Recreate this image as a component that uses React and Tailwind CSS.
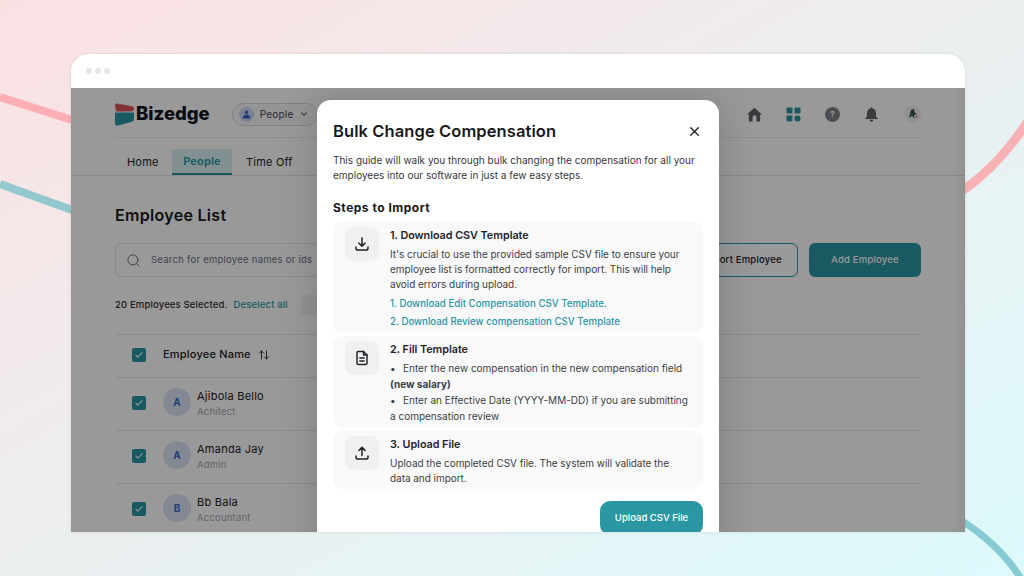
import { ChevronDown, Search, ArrowUpDown, Check, X } from 'lucide-react'

const employees = [
  { name: 'Ajibola Bello', role: 'Achitect', letter: 'A' },
  { name: 'Amanda Jay', role: 'Admin', letter: 'A' },
  { name: 'Bb Bala', role: 'Accountant', letter: 'B' },
]

function Logo() {
  return (
    <svg width="20" height="23" viewBox="0 0 20 23" className="shrink-0">
      <path d="M2 0.5 L16 3 Q19 3.6 19 6 Q19 8.4 16 8.4 L1 8.4 L0 2 Q0.2 0.3 2 0.5Z" fill="#d9585c" />
      <path d="M0 9.5 L19 9.5 L19 16 Q19 18 17 18.8 L3 22.6 Q0 23 0 20Z" fill="#2a97a3" />
    </svg>
  )
}

function TopIcons() {
  return (
    <div className="flex items-center gap-[24px]">
      <svg width="15" height="15" viewBox="0 0 24 24" fill="#5f6368">
        <path d="M12 1 L24 12 L21 12 L21 23 L15 23 L15 15.5 Q15 13 12 13 Q9 13 9 15.5 L9 23 L3 23 L3 12 L0 12Z" />
      </svg>
      <svg width="15" height="15" viewBox="0 0 15 15" fill="#2a97a3">
        <rect x="0.5" y="0.5" width="6" height="6" rx="0.8" />
        <rect x="8.5" y="0.5" width="6" height="6" rx="0.8" />
        <rect x="0.5" y="8.5" width="6" height="6" rx="0.8" />
        <circle cx="11.5" cy="11.5" r="3.1" />
      </svg>
      <div className="w-[15px] h-[15px] rounded-full bg-[#7d8186] flex items-center justify-center text-white text-[8px] font-bold leading-none">?</div>
      <svg width="15" height="15" viewBox="0 0 24 24" fill="#5f6368">
        <path d="M12 0.5 Q13.6 0.5 13.8 2.3 Q19.2 3.6 19.2 10 L19.2 15 L22.5 19 L1.5 19 L4.8 15 L4.8 10 Q4.8 3.6 10.2 2.3 Q10.4 0.5 12 0.5Z M9 20.5 L15 20.5 Q14.6 23.5 12 23.5 Q9.4 23.5 9 20.5Z" />
      </svg>
      <svg width="18" height="18" viewBox="0 0 18 18" className="ml-[1px]">
        <circle cx="9" cy="9" r="8.6" fill="#eef0ee" />
        <path d="M5 13 L7 5 L10 3.5 L10.5 7 L13 9 L10 10 L10.5 14 L8 11 Z" fill="#3b5a4a" />
        <path d="M11 10 L14 12 L12 12.5Z" fill="#b5545a" />
      </svg>
    </div>
  )
}

function Row({ name, role, letter }) {
  return (
    <div className="h-[53px] border-b border-[#e5e7eb] flex items-center">
      <div className="ml-[17px] mb-[2px] w-[14px] h-[14px] rounded-[2px] bg-[#2a97a3] flex items-center justify-center">
        <Check size={10} strokeWidth={2.5} className="text-white" />
      </div>
      <div className="ml-[17px] mb-[4px] w-[28px] h-[28px] rounded-full bg-[#dbe3f5] flex items-center justify-center text-[10px] font-bold text-[#3f66cc]">
        {letter}
      </div>
      <div className="ml-[6px] -mt-[1px]">
        <div className="text-[11px] leading-[15px] text-[#1d2129] tracking-[0.25px]">{name}</div>
        <div className="text-[9.5px] leading-[15px] text-[#a2a7af] tracking-[0.2px]">{role}</div>
      </div>
    </div>
  )
}

function Background() {
  return (
    <svg className="absolute inset-0" width="1024" height="576" viewBox="0 0 1024 576" fill="none">
      <path d="M0 97 L72 120" stroke="#fbafb2" strokeWidth="8" />
      <path d="M0 184 L72 210" stroke="#93c8cf" strokeWidth="8" />
      <path d="M962 191 Q1000 165 1030 118" stroke="#f8b2b5" strokeWidth="9" />
      <path d="M962 521 Q1000 545 1022 580" stroke="#87cbd2" strokeWidth="7" />
    </svg>
  )
}

function IconBox({ children }) {
  return (
    <div className="w-[34px] h-[34px] rounded-[8px] bg-[#f0f0f0] flex items-center justify-center shrink-0">
      <svg width="18" height="18" viewBox="0 0 18 18" fill="none" stroke="#1f2429" strokeWidth="1.5" strokeLinecap="round" strokeLinejoin="round">
        {children}
      </svg>
    </div>
  )
}

function Modal() {
  return (
    <div className="absolute left-[246px] top-[12px] w-[402px] h-[480px] bg-white rounded-t-[14px] shadow-[0_0_40px_rgba(0,0,0,0.18)] px-[16px] pt-[20px]">
      <div className="flex items-center justify-between h-[22px]">
        <h2 className="text-[16.5px] font-semibold text-[#17191c] tracking-[0.09px]">Bulk Change Compensation</h2>
        <X size={15} strokeWidth={2} className="text-[#17191c] mr-[1px]" />
      </div>
      <p className="mt-[11px] text-[10px] leading-[15px] text-[#33383d]">
        This guide will walk you through bulk changing the compensation for all your employees into our software in just a few easy steps.
      </p>
      <h3 className="mt-[17px] text-[12px] leading-[16px] font-bold text-[#17191c] tracking-[0.5px]">Steps to Import</h3>

      <div className="mt-[5px] flex flex-col gap-[3px]">
        <div className="h-[112px] rounded-[10px] bg-[#f9f9f9] flex pl-[12px] pt-[6px]">
          <IconBox>
            <path d="M9 3 V11 M5.8 8 L9 11.2 L12.2 8" />
            <path d="M3 12 V13.2 Q3 15 5 15 H13 Q15 15 15 13.2 V12" />
          </IconBox>
          <div className="ml-[11px] w-[300px] pt-[1px]">
            <div className="text-[10.8px] leading-[15px] font-semibold text-[#1f2429] tracking-[-0.03px]">1. Download CSV Template</div>
            <p className="mt-[4px] text-[10px] leading-[15px] text-[#3a3f44] tracking-[-0.03px]">
              It's crucial to use the provided sample CSV file to ensure your employee list is formatted correctly for import. This will help avoid errors during upload.
            </p>
            <div className="mt-[3px] text-[9.7px] leading-[18px] font-medium text-[#2a97a3]">
              <div>1. Download Edit Compensation CSV Template.</div>
              <div>2. Download Review compensation CSV Template</div>
            </div>
          </div>
        </div>

        <div className="h-[92px] rounded-[10px] bg-[#f9f9f9] flex pl-[12px] pt-[5px]">
          <IconBox>
            <path d="M5 2.5 H10.5 L14 6 V14 Q14 15.5 12.5 15.5 H5.5 Q4 15.5 4 14 V3.5 Q4 2.5 5 2.5Z" />
            <path d="M10.5 2.5 V6 H14 M6.8 9 H11.2 M6.8 12 H11.2" />
          </IconBox>
          <div className="ml-[11px] w-[312px] pt-[1px]">
            <div className="text-[10.8px] leading-[15px] font-semibold text-[#1f2429] tracking-[-0.03px]">2. Fill Template</div>
            <div className="mt-[3px] text-[10px] leading-[16px] text-[#3a3f44]">
              <div><span className="inline-block w-[13px]">•</span>Enter the new compensation in the new compensation field</div>
              <div className="font-bold">(new salary)</div>
              <div><span className="inline-block w-[13px]">•</span>Enter an Effective Date (YYYY-MM-DD) if you are submitting</div>
              <div>a compensation review</div>
            </div>
          </div>
        </div>

        <div className="h-[59px] rounded-[10px] bg-[#f9f9f9] flex pl-[12px] pt-[6px] -mt-[1px]">
          <IconBox>
            <path d="M9 11.5 V3.5 M5.8 6.5 L9 3.3 L12.2 6.5" />
            <path d="M3 12 V13.2 Q3 15 5 15 H13 Q15 15 15 13.2 V12" />
          </IconBox>
          <div className="ml-[11px] w-[295px] pt-[1px]">
            <div className="text-[10.8px] leading-[15px] font-semibold text-[#1f2429] tracking-[-0.03px]">3. Upload File</div>
            <p className="mt-[4px] text-[10px] leading-[15px] text-[#3a3f44] tracking-[-0.04px]">
              Upload the completed CSV file. The system will validate the data and import.
            </p>
          </div>
        </div>
      </div>

      <div className="mt-[12px] flex justify-end">
        <button className="w-[103px] h-[34px] pt-[1px] rounded-[10px] bg-[#2a97a3] text-white text-[9.5px] font-medium">
          Upload CSV File
        </button>
      </div>
    </div>
  )
}

export default function App() {
  return (
    <div className="relative w-[1024px] h-[576px] overflow-hidden bg-linear-to-br from-[#fbe0e2] via-[#eceff0] to-[#dcfafc] font-['Inter','Liberation_Sans',sans-serif]">
      <Background />

      <div className="relative mt-[54px] ml-[71px] w-[894px] h-[478px] rounded-t-[18px] overflow-hidden flex flex-col shadow-[0_0_3px_rgba(0,0,0,0.12)]">
        <div className="h-[34px] bg-white flex items-center gap-[3px] pl-[15px] shrink-0">
          <span className="w-[6px] h-[6px] rounded-full bg-[#e6e6e6]" />
          <span className="w-[6px] h-[6px] rounded-full bg-[#e6e6e6]" />
          <span className="w-[6px] h-[6px] rounded-full bg-[#e6e6e6]" />
        </div>

        <div className="relative flex-1 bg-white overflow-hidden">
          {/* page behind the dialog */}
          <div className="px-[44px]">
            <div className="h-[50px] border-b border-[#eceef0] flex items-center pt-[3px]">
              <Logo />
              <span className="ml-[1px] text-[18.5px] font-extrabold text-[#10151c]">Bizedge</span>
              <div className="ml-[22px] h-[23px] w-[86px] rounded-full border border-[#d5d9de] bg-[#f8f9fb] flex items-center pl-[6px]">
                <div className="w-[15px] h-[15px] rounded-full bg-[#cdd8f5] flex items-center justify-center">
                  <svg width="9" height="9" viewBox="0 0 9 9" fill="#3f66cc"><circle cx="4.5" cy="2.2" r="1.8" /><path d="M0.5 8.5 Q1 4.6 4.5 4.6 Q8 4.6 8.5 8.5Z" /></svg>
                </div>
                <span className="ml-[6px] text-[10px] text-[#444a52] tracking-[0.2px]">People</span>
                <ChevronDown size={10} strokeWidth={2.5} className="ml-[6px] text-[#444a52]" />
              </div>
              <div className="ml-auto mr-[-1px]"><TopIcons /></div>
            </div>
          </div>
          <div className="h-[38px] border-b border-[#e5e7eb] pl-[44px] flex items-end">
            <div className="w-[57px] h-[26px] flex items-center pl-[12px] text-[11px] text-[#1d2129] tracking-[0.2px]">Home</div>
            <div className="w-[60px] h-[26px] flex items-center justify-center text-[11px] font-semibold text-[#2a97a3] bg-[#d9f0f3] rounded-t-[3px] border-b-2 border-[#2a97a3] tracking-[0.2px]">People</div>
            <div className="ml-[14px] h-[26px] flex items-center text-[11px] text-[#1d2129] tracking-[0.2px]">Time Off</div>
          </div>

          <div className="px-[44px]">
            <h1 className="mt-[28px] text-[16px] leading-[22px] font-semibold text-[#17191c] tracking-[0.3px]">Employee List</h1>
            <div className="mt-[17px] flex items-center">
              <div className="w-[300px] h-[34px] rounded-[6px] border border-[#e1e4e8] flex items-center pl-[10px]">
                <Search size={15} strokeWidth={1.5} className="text-[#5f6368]" />
                <span className="ml-[10px] text-[9.5px] text-[#6b7280] tracking-[0.25px] whitespace-nowrap">Search for employee names or ids</span>
              </div>
              <div className="ml-auto mr-[11px] w-[130px] h-[34px] rounded-[6px] border border-[#2a97a3] flex items-center justify-center pl-[18px] text-[9.5px] font-medium text-[#1d2129] tracking-[0.2px]">Import Employee</div>
              <div className="w-[112px] h-[34px] rounded-[6px] bg-[#2a97a3] flex items-center justify-center text-[9.5px] font-medium text-white tracking-[0.2px]">Add Employee</div>
            </div>
            <div className="mt-[20px] flex items-center h-[16px] text-[9.5px] font-medium tracking-[0.15px]">
              <span className="text-[#2b2f36]">20 Employees Selected.</span>
              <span className="ml-[6px] text-[#2a97a3]">Deselect all</span>
              <span className="ml-[13px] w-[30px] h-[20px] rounded-[4px] bg-[#f3f4f6]" />
            </div>
            <div className="mt-[21px] h-[44px] border-y border-[#e5e7eb] flex items-center pb-[3px]">
              <div className="ml-[17px] w-[14px] h-[14px] rounded-[2px] bg-[#2a97a3] flex items-center justify-center">
                <Check size={10} strokeWidth={2.5} className="text-white" />
              </div>
              <span className="ml-[17px] text-[11px] font-medium text-[#1d2129] tracking-[0.2px]">Employee Name</span>
              <ArrowUpDown size={12} strokeWidth={1.75} className="ml-[7px] text-[#1d2129]" />
            </div>
            {employees.map(e => <Row key={e.name} {...e} />)}
          </div>

          {/* dimmed backdrop */}
          <div className="absolute inset-0 bg-black/40" />
          <div className="absolute top-0 right-0 bottom-0 w-[15px] bg-linear-to-r from-transparent to-black/5" />
          <Modal />
        </div>
      </div>
    </div>
  )
}
